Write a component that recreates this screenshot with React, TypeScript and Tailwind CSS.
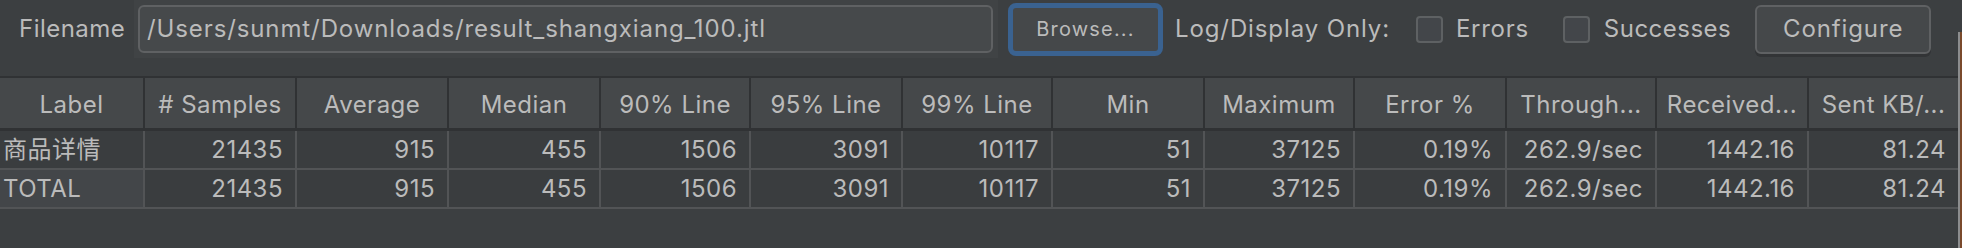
import React from 'react';

const FONT = "font-['Inter','Noto_Sans_CJK_SC',sans-serif]";

const columns = [
  { name: 'Label', w: 'w-[143px]' },
  { name: '# Samples', w: 'w-[152px]' },
  { name: 'Average', w: 'w-[152px]' },
  { name: 'Median', w: 'w-[152px]' },
  { name: '90% Line', w: 'w-[150px]' },
  { name: '95% Line', w: 'w-[152px]' },
  { name: '99% Line', w: 'w-[150px]' },
  { name: 'Min', w: 'w-[152px]' },
  { name: 'Maximum', w: 'w-[150px]' },
  { name: 'Error %', w: 'w-[152px]' },
  { name: 'Through...', w: 'w-[150px]' },
  { name: 'Received...', w: 'w-[152px]' },
  { name: 'Sent KB/...', w: 'w-[151px]' },
];

const rows = [
  ['商品详情', '21435', '915', '455', '1506', '3091', '10117', '51', '37125', '0.19%', '262.9/sec', '1442.16', '81.24'],
  ['TOTAL', '21435', '915', '455', '1506', '3091', '10117', '51', '37125', '0.19%', '262.9/sec', '1442.16', '81.24'],
];

const Checkbox = () => (
  <div className="w-[27px] h-[27px] rounded-[4px] border-2 border-[#5e6163] bg-[#43464a]"></div>
);

const App = () => {
  return (
    <div className={`w-[1962px] h-[248px] bg-[#3c3f41] text-[#bbbbbb] flex overflow-hidden ${FONT}`}>
      <div className="w-[1958px] flex flex-col">
        {/* Toolbar */}
        <div className="h-[58px] flex items-center text-[24px] tracking-[0.037em]">
          <div className="w-[134px] pl-[19px] tracking-[0.02em]">Filename</div>
          <div className="w-[864px] h-[58px] bg-[#404345] flex items-center pl-[4px]">
            <div className="w-[855px] h-[48px] rounded-[6px] border-2 border-[#5f6163] bg-[#46494b] flex items-center pl-[7px] pb-[1px]">
              /Users/sunmt/Downloads/result_shangxiang_100.jtl
            </div>
          </div>
          <div className="ml-[10px] w-[155px] h-[53px] rounded-[8px] border-[5px] border-[#3a6290] bg-[#45484a] flex items-center justify-center text-[20px] tracking-[0.06em]">
            Browse...
          </div>
          <div className="ml-[12px]">Log/Display Only:</div>
          <div className="ml-[26px] flex items-center gap-[13px] tracking-[0.03em]">
            <Checkbox />
            <span>Errors</span>
          </div>
          <div className="ml-[34px] flex items-center gap-[14px] tracking-[0.02em]">
            <Checkbox />
            <span>Successes</span>
          </div>
          <div className="ml-[24px] w-[176px] h-[49px] rounded-[6px] border-2 border-[#5f6163] bg-[#45484a] shadow-[0_3px_0_#323436] flex items-center justify-center">
            Configure
          </div>
        </div>

        {/* Table */}
        <div className="mt-[18px] border-t-2 border-[#303234]">
          <div className="flex h-[53px] bg-[#45484a] border-b-[3px] border-[#303234] text-[24px] tracking-[0.02em]">
            {columns.map((c, i) => (
              <div
                key={c.name}
                className={`${c.w} shrink-0 flex items-center justify-center pt-[4px] ${i > 0 ? 'border-l-2 border-[#303234]' : ''}`}
              >
                {c.name}
              </div>
            ))}
          </div>
          {rows.map((r, ri) => (
            <div key={ri} className="flex h-[39px] bg-[#3a3d3f] border-b-2 border-[#525456] text-[24px] tracking-[0.02em]">
              {r.map((v, i) => (
                <div
                  key={i}
                  className={`${columns[i].w} shrink-0 flex items-center ${
                    i === 0 ? `justify-start pl-[3px] ${ri === 1 ? 'bg-[#434649]' : ''}` : 'justify-end pr-[12px] border-l-2 border-[#525456]'
                  }`}
                >
                  {v}
                </div>
              ))}
            </div>
          ))}
        </div>
      </div>
      {/* window edge */}
      <div className="w-[4px] flex flex-col">
        <div className="h-[32px]"></div>
        <div className="flex-1 flex">
          <div className="w-[2px] bg-[#8c8d8e]"></div>
          <div className="w-[2px] bg-[#7a4a2c]"></div>
        </div>
      </div>
    </div>
  );
};

export default App;
